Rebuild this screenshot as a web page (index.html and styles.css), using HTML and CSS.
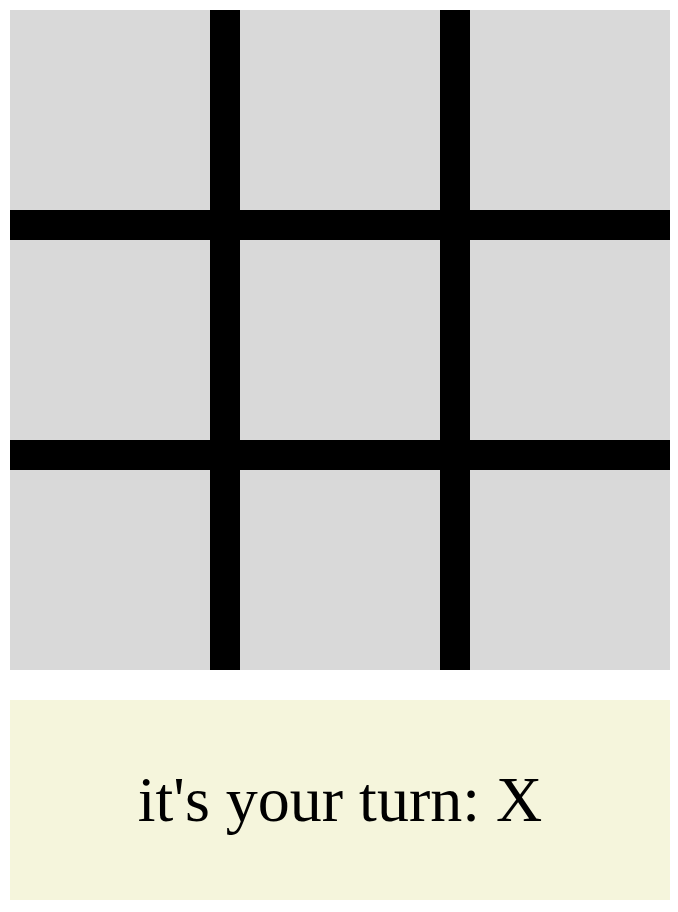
FILE: index.html
```html
<!DOCTYPE html>
<html>
<head>
<meta charset="utf-8">
<link rel="stylesheet" href="styles.css">
</head>
<body>
<div class="game">
  <div class="board">
    <div class="cell"></div><div class="cell"></div><div class="cell"></div>
    <div class="cell"></div><div class="cell"></div><div class="cell"></div>
    <div class="cell"></div><div class="cell"></div><div class="cell"></div>
  </div>
  <div class="status">it's your turn: X</div>
</div>
</body>
</html>
```
FILE: styles.css
```css
html, body {
  margin: 0;
  padding: 0;
  background: #fff;
}
body {
  padding: 10px;
  font-family: "Liberation Serif", "Times New Roman", serif;
}
.game {
  width: 660px;
  display: flex;
  flex-direction: column;
  gap: 30px;
}
.board {
  display: grid;
  grid-template-columns: repeat(3, 200px);
  grid-template-rows: repeat(3, 200px);
  gap: 30px;
  background: #000;
}
.cell {
  background: #d9d9d9;
}
.status {
  height: 200px;
  background: #f5f5dc;
  display: flex;
  align-items: center;
  justify-content: center;
  font-size: 64px;
  color: #000;
}
```
